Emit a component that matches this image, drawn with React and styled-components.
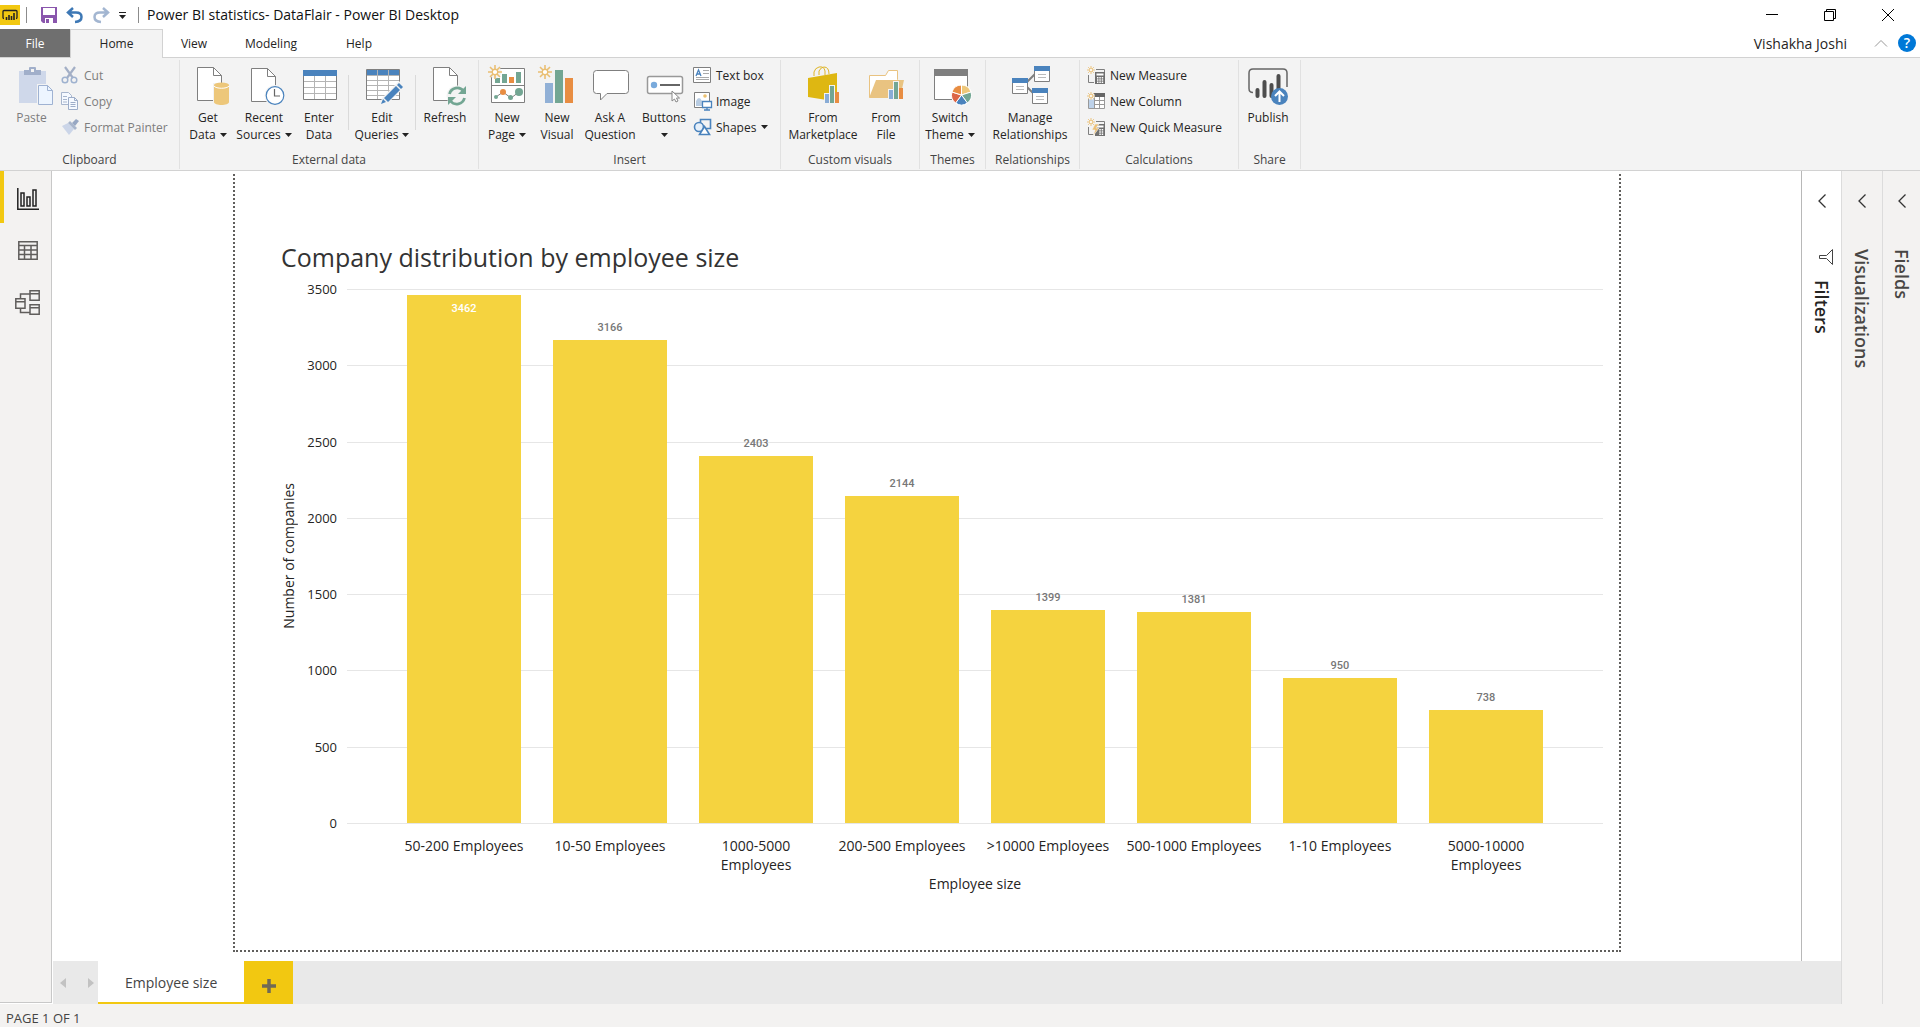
import React from "react";
import styled, { createGlobalStyle, css } from "styled-components";

const color = {
  yellow: "#f2c811",
  bar: "#f5d33f",
  chrome: "#f3f3f3",
  pane: "#f3f2f1",
  line: "#d2d2d2",
  blue: "#4a83bd",
  green: "#73a693",
  orange: "#e88d42",
  sand: "#edc77a",
  grey: "#7f7f7f",
};

const GlobalStyle = createGlobalStyle`
  * { box-sizing: border-box; }
  body {
    margin: 0;
    background: #fff;
    color: #252423;
    font-family: "Open Sans", "Noto Sans", sans-serif;
    font-size: 12px;
  }
  button {
    border: 0;
    padding: 0;
    background: none;
    color: inherit;
    font: inherit;
  }
  svg { display: block; flex: none; overflow: visible; }
`;

const Window = styled.div`
  display: flex;
  flex-direction: column;
  min-height: 100vh;
`;

/* ---------- title bar ---------- */

const TitleBar = styled.header`
  display: flex;
  align-items: center;
  height: 29px;
  padding-right: 3px;
`;

const TitleRule = styled.span`
  width: 1px;
  height: 16px;
  margin: 0 ${(p) => p.$after}px 0 ${(p) => p.$before}px;
  background: #8c8c8c;
`;

const QuickActions = styled.div`
  display: flex;
  align-items: center;
  gap: 8px;
`;

const WindowTitle = styled.h1`
  margin: 0;
  flex: 1;
  font-size: 14px;
  font-weight: 400;
  line-height: 20px;
  color: #111;
`;

const CaptionButton = styled.button`
  display: flex;
  align-items: center;
  justify-content: center;
  width: 58px;
  height: 28px;
`;

/* ---------- ribbon tabs ---------- */

const TabStrip = styled.nav`
  display: flex;
  align-items: stretch;
  height: 29px;
  border-bottom: 1px solid ${color.line};
`;

const RibbonTab = styled.button`
  width: ${(p) => p.$width}px;
  line-height: 28px;
  padding-top: 1px;
  text-align: center;
  ${(p) => p.$kind === "file" && css`
    background: #6f6f6f;
    color: #fff;
  `}
  ${(p) => p.$kind === "active" && css`
    height: 29px;
    padding-top: 0;
    border: 1px solid ${color.line};
    border-bottom: 0;
    background: ${color.chrome};
  `}
`;

const Account = styled.div`
  display: flex;
  align-items: center;
  margin-left: auto;
  padding-right: 4px;
  font-size: 14px;
`;

const AccountName = styled.span`
  margin-right: 28px;
`;

const HelpButton = styled.button`
  width: 18px;
  height: 18px;
  margin-left: 11px;
  border-radius: 50%;
  background: #0078d7;
  color: #fff;
  font-weight: 600;
  line-height: 18px;
`;

/* ---------- ribbon ---------- */

const Ribbon = styled.section`
  display: flex;
  height: 113px;
  padding: 2px 0 1px;
  border-bottom: 1px solid ${color.line};
  background: ${color.chrome};
`;

const Group = styled.section`
  display: flex;
  flex-direction: column;
  flex: none;
  width: ${(p) => p.$width}px;
  border-right: 1px solid #e1e1e1;
`;

const GroupItems = styled.div`
  display: flex;
  flex: 1;
  padding-left: 3px;
`;

const GroupName = styled.h2`
  margin: 0;
  font-size: 12px;
  font-weight: 400;
  line-height: 18px;
  text-align: center;
  white-space: nowrap;
  color: #444;
`;

const LargeButton = styled.button`
  display: flex;
  flex-direction: column;
  align-items: center;
  flex: none;
  gap: 3px;
  width: ${(p) => p.$width}px;
  padding-top: 6px;
  line-height: 17px;
  white-space: nowrap;
  &:disabled { color: #7d7d7d; }
`;

const LabelLine = styled.span`
  display: flex;
  align-items: center;
  justify-content: center;
  gap: 4px;
  min-height: 17px;
`;

const ItemRule = styled.span`
  width: 1px;
  height: 55px;
  margin: 15px 5px 0;
  background: #dadada;
`;

const SmallStack = styled.div`
  display: flex;
  flex-direction: column;
  padding: 2px 0 0 ${(p) => p.$inset}px;
`;

const SmallButton = styled.button`
  display: flex;
  align-items: center;
  gap: 5px;
  height: 26px;
  white-space: nowrap;
  &:disabled { color: #7d7d7d; }
`;

/* ---------- workspace ---------- */

const Workspace = styled.div`
  display: flex;
  flex: 1;
`;

const ViewRail = styled.nav`
  width: 52px;
  margin-bottom: 1px;
  border-right: 1px solid #c8c8c8;
  border-bottom: 1px solid #c8c8c8;
  background: ${color.pane};
`;

const ViewButton = styled.button`
  display: flex;
  align-items: center;
  justify-content: center;
  width: 100%;
  height: 52px;
  padding-top: 3px;
  border-left: 4px solid ${(p) => (p.$active ? color.yellow : "transparent")};
`;

const Main = styled.main`
  display: flex;
  flex: 1;
  flex-direction: column;
`;

const ReportRow = styled.div`
  display: flex;
  flex: 1;
`;

const Canvas = styled.div`
  display: flex;
  flex: 1;
  padding: 3px 180px 9px 181px;
`;

const ReportPage = styled.section`
  display: flex;
  flex: 1;
  flex-direction: column;
  padding: 65px 16px 56px 46px;
  border: 2px dotted #605e5c;
  border-top: 0;
`;

const ChartTitle = styled.h2`
  margin: 0 0 14px;
  font-size: 25px;
  font-weight: 400;
  line-height: 36px;
  color: #333;
`;

const ChartGrid = styled.div`
  display: grid;
  flex: 1;
  grid-template-columns: 16px 40px 1fr;
  grid-template-rows: 1fr auto auto;
  font-size: 14px;
`;

const ValueAxisTitle = styled.div`
  align-self: center;
  justify-self: center;
  writing-mode: vertical-rl;
  transform: rotate(180deg);
  line-height: 16px;
`;

const ValueAxis = styled.div`
  display: flex;
  flex-direction: column;
  justify-content: space-between;
  margin: -9px 0;
  font-size: 13px;
  line-height: 18px;
  text-align: right;
`;

const Plot = styled.div`
  position: relative;
  display: flex;
  min-height: 300px;
  margin-left: 10px;
  padding: 0 44px;
`;

const GridLines = styled.div`
  position: absolute;
  inset: 0 0 -1px;
  display: flex;
  flex-direction: column;
  justify-content: space-between;
`;

const GridLine = styled.span`
  height: 1px;
  background: #e6e6e6;
`;

const BarColumn = styled.div`
  position: relative;
  display: flex;
  flex: 1;
  flex-direction: column;
  align-items: center;
  justify-content: flex-end;
`;

const Bar = styled.div`
  flex: none;
  width: 78%;
  background: ${color.bar};
  text-align: center;
`;

const BarValue = styled.span`
  display: block;
  margin: 6px 0 4px;
  font-family: Roboto, sans-serif;
  font-size: 11px;
  font-weight: 500;
  line-height: 16px;
  text-align: center;
  color: ${(p) => (p.$inside ? "#fff" : "#777")};
`;

const CategoryAxis = styled.div`
  display: flex;
  grid-column: 3;
  margin-left: 10px;
  padding: 13px 44px 0;
`;

const Category = styled.span`
  flex: 1;
  padding: 0 4px;
  line-height: 19px;
  text-align: center;
`;

const CategoryAxisTitle = styled.div`
  grid-column: 3;
  margin-left: 10px;
  line-height: 20px;
  text-align: center;
`;

/* ---------- collapsed panes ---------- */

const SidePane = styled.aside`
  display: flex;
  flex-direction: column;
  align-items: center;
  width: ${(p) => p.$width}px;
  padding-top: 23px;
  border-left: 1px solid ${(p) => (p.$light ? "#b8b8b8" : "#dcdcdc")};
  background: ${(p) => (p.$light ? "#fff" : color.pane)};
  color: ${(p) => (p.$light ? "#252423" : "#484644")};
`;

const PaneToggle = styled.button`
  margin-bottom: 41px;
`;

const PaneName = styled.h2`
  display: flex;
  align-items: flex-start;
  gap: 15px;
  margin: 0;
  writing-mode: vertical-rl;
  font-size: 18px;
  font-weight: 600;
  line-height: 22px;
`;

/* ---------- page tabs and status ---------- */

const PageTabs = styled.nav`
  display: flex;
  height: 43px;
  margin-left: 1px;
  background: #e9e9e9;
`;

const PageArrows = styled.div`
  display: flex;
  align-items: center;
  justify-content: space-between;
  width: 45px;
  padding: 0 4px 0 7px;
`;

const PageTab = styled.button`
  padding: 2px 27px 0;
  border-bottom: 2px solid ${color.yellow};
  background: #fff;
  color: #444;
  font-size: 14px;
`;

const AddPage = styled.button`
  display: flex;
  align-items: center;
  justify-content: center;
  width: 49px;
  padding-top: 6px;
  background: ${color.yellow};
`;

const StatusBar = styled.footer`
  height: 23px;
  padding: 4px 6px 0;
  background: ${color.pane};
  color: #444;
  font-size: 13px;
  line-height: 20px;
`;

/* ---------- icons ---------- */

const Big = ({ children }) => (
  <svg width="48" height="40" viewBox="0 0 48 40" fill="none" aria-hidden="true">{children}</svg>
);
const Small = ({ children }) => (
  <svg width="18" height="18" viewBox="0 0 18 18" fill="none" aria-hidden="true">{children}</svg>
);
const Caret = () => (
  <svg width="7" height="4" viewBox="0 0 7 4" aria-hidden="true"><path d="M0 0h7L3.500 4z" fill="#222" /></svg>
);
const Sheet = ({ x, y }) => (
  <g transform={`translate(${x} ${y})`} stroke={color.grey}>
    <path d="M.5.5h16l8 8v25H.5z" fill="#fff" />
    <path d="M16.5.5v8h8" />
  </g>
);
const Spark = ({ x, y, r = 6 }) => (
  <g transform={`translate(${x} ${y}) scale(${r / 6})`}>
    <circle r="6.5" fill={color.chrome} />
    <path d="M0-7V-3M0 3V7M-7 0H-3M3 0H7M-5-5-2-2M2 2 5 5M-5 5-2 2M2-2 5-5" stroke="#eabf73" strokeWidth="1.6" />
    <circle r="2.8" stroke="#eabf73" strokeWidth="1.4" fill="#fff" />
  </g>
);
const MiniBars = ({ x, y }) => (
  <g transform={`translate(${x} ${y})`}>
    <path d="M-1 7h5V-1h6v7h5v12H-1z" fill={color.chrome} />
    <path d="M0 8h4v9H0z" fill="#89acd6" />
    <path d="M5 0h4v17H5z" fill={color.green} />
    <path d="M10 6h4v11h-4z" fill={color.orange} />
  </g>
);

const icons = {
  paste: (
    <Big>
      <path d="M11 5h27v32H11z" fill="#cfd8ea" />
      <path d="M16 9V4h5V2q0-1 1-1h5q1 0 1 1v2h5v5z" fill="#a1afca" />
      <path d="M23 3h3v3h-3z" fill="#f3f3f3" />
      <path d="M29 18h17v22H29z" fill={color.chrome} />
      <path d="M30.500 19.500h9l5 5v14h-14z" fill="#edf5ff" stroke="#9fb2d2" />
      <path d="M39.500 19.500v5h5" stroke="#9fb2d2" />
    </Big>
  ),
  data: (
    <Big>
      <Sheet x={13} y={1} />
      <path d="M29 17h17v23H29z" fill={color.chrome} />
      <path d="M30 19v17c0 4 15 4 15 0V19z" fill={color.sand} />
      <ellipse cx="37.500" cy="19" rx="7.500" ry="2.500" fill={color.sand} />
      <path d="M30 20c2 3 13 3 15 0" stroke="#fff" />
    </Big>
  ),
  recent: (
    <Big>
      <Sheet x={11} y={2} />
      <circle cx="35" cy="29.500" r="10.500" fill={color.chrome} />
      <circle cx="35" cy="29.500" r="8.800" fill="#fff" stroke={color.blue} strokeWidth="1.200" />
      <path d="M34.500 23v7H40" stroke="#666" strokeWidth="1.200" />
    </Big>
  ),
  table: (
    <Big>
      <path d="M8.500 4.500h33v29h-33z" fill="#fff" stroke={color.grey} />
      <path d="M8 4h34v6H8z" fill={color.blue} />
      <path d="M19.500 10v23M30.500 10v23M9 15.500h32M9 21.500h32M9 27.500h32" stroke="#b4b4b4" />
    </Big>
  ),
  edit: (
    <Big>
      <path d="M8.500 3.500h33v30h-33z" fill="#fff" stroke={color.grey} />
      <path d="M9 4h32v5H9z" fill={color.blue} />
      <path d="M19.500 4v29M30.500 4v29M9 9.500h32M9 14.500h32M9 19.500h32M9 24.500h32M9 29.500h32" stroke="#b4b4b4" />
      <path d="m22 39 2-7 17-17 6 6-17 16z" fill={color.chrome} />
      <path d="m23 38 2-5 3 3zM26 32l12-12 4 4-12 12zM39 19l2-2 4 4-2 2z" fill={color.blue} />
    </Big>
  ),
  refresh: (
    <Big>
      <Sheet x={12} y={1} />
      <circle cx="36" cy="30" r="10.500" fill={color.chrome} />
      <path d="M28.500 28a8 8 0 0 1 14-3M43.500 32a8 8 0 0 1-14 3" stroke={color.green} strokeWidth="2.800" />
      <path d="M45 20v8h-8zM27 39v-8h8z" fill={color.green} />
    </Big>
  ),
  newPage: (
    <Big>
      <path d="M8.500 2.500h33v34h-33z" fill="#fff" stroke={color.grey} />
      <path d="M9 19.500h32" stroke={color.grey} />
      <path d="M12 12h5v5h-5zM19 8h5v9h-5zM33 6h5v11h-5z" fill={color.green} />
      <path d="M26 11h5v6h-5z" fill={color.orange} />
      <path d="m13 31 7-5 8 6 8-6" stroke={color.grey} />
      <circle cx="13" cy="31" r="2" fill={color.green} />
      <circle cx="20" cy="26" r="3" fill={color.orange} />
      <circle cx="27.500" cy="31.500" r="2.500" fill={color.green} />
      <circle cx="36" cy="26" r="4" fill={color.green} />
      <Spark x={12} y={6} />
    </Big>
  ),
  newVisual: (
    <Big>
      <path d="M12 17h8v20h-8z" fill="#91b0d6" />
      <path d="M22 4h8v33h-8z" fill={color.green} />
      <path d="M32 12h8v25h-8z" fill={color.orange} />
      <Spark x={12} y={6} />
    </Big>
  ),
  ask: (
    <Big>
      <path d="M10.500 4.500h29q3 0 3 3v17q0 3-3 3H21l-6.500 6.500v-6.500h-4q-3 0-3-3v-17q0-3 3-3z" fill="#fff" stroke={color.grey} />
    </Big>
  ),
  buttons: (
    <Big>
      <rect x="7.500" y="10.500" width="35" height="17" rx="2" fill="#fff" stroke="#999" strokeWidth="1.500" />
      <circle cx="14" cy="19" r="3.200" fill="#79aadc" />
      <path d="M20 19h20" stroke="#666" strokeWidth="2" />
      <path d="m32 25 0 10 2.500-2 1.500 3 2-1-1.500-3h3z" fill="#fff" stroke="#888" />
    </Big>
  ),
  market: (
    <Big>
      <path d="M15 10V6q1-4 5-5 5-1 6 4v4M20 9V5q2-4 5-4 5 0 5 7" stroke="#dfb528" />
      <path d="m9 12 29-5v27l-4 1L9 31z" fill="#deb712" />
      <MiniBars x={26} y={20} />
    </Big>
  ),
  folder: (
    <Big>
      <path d="M7.500 31V9.500h16l3-5h9v9l-2 18z" fill="#fff" stroke="#e9c381" />
      <path d="m7 32 7-18h28l-4 18z" fill="#e9c381" />
      <MiniBars x={27} y={16} />
    </Big>
  ),
  theme: (
    <Big>
      <path d="M8.500 3.500h33v30h-33z" fill="#fff" stroke={color.grey} />
      <path d="M8 3h34v7H8z" fill={color.grey} />
      <circle cx="35.500" cy="29" r="10.500" fill="#fff" />
      <g transform="translate(35.500 29)" stroke="#fff" strokeWidth="1">
        <path d="M0 0V-10A10 10 0 0 1 9.500-3z" fill={color.sand} />
        <path d="M0 0 9.500-3A10 10 0 0 1 5.900 8z" fill={color.green} />
        <path d="M0 0 5.900 8A10 10 0 0 1-5.900 8z" fill={color.blue} />
        <path d="M0 0-5.900 8A10 10 0 0 1-9.500-3z" fill="#dc6646" />
        <path d="M0 0-9.500-3A10 10 0 0 1 0-10z" fill={color.orange} />
      </g>
    </Big>
  ),
  relations: (
    <Big>
      <path d="m20 17 9-9M20 20l8 8" stroke={color.grey} strokeWidth="2" />
      {[[6, 12], [28, 0], [26, 22]].map(([x, y]) => (
        <g key={x} transform={`translate(${x} ${y})`}>
          <path d="M.5.500h15v15H.5z" fill="#fff" stroke={color.grey} />
          <path d="M0 0h16v5H0z" fill={color.blue} />
          <path d="M4 8.500h8M4 11.500h8" stroke="#bbb" />
        </g>
      ))}
    </Big>
  ),
  publish: (
    <Big>
      <path d="M9 26.500q-4 0-4-4V7q0-4 4-4h30q4 0 4 4v14" stroke="#666" strokeWidth="1.500" />
      <path d="M13.500 24v6M20.500 16v14M27.500 19v11M34.500 10v15" stroke="#4d4d4d" strokeWidth="4" strokeLinecap="round" />
      <circle cx="35.500" cy="30.500" r="8.500" fill={color.blue} />
      <path d="M35.500 36V26M31 30l4.500-4.500L40 30" stroke="#fff" strokeWidth="2" />
    </Big>
  ),
  cut: (
    <Small>
      <path d="m4 1 8 11M14 1 6 12" stroke="#a3afc6" strokeWidth="2.200" />
      <circle cx="4" cy="14" r="2.800" stroke="#9fb2cf" strokeWidth="1.500" />
      <circle cx="13" cy="14" r="2.800" stroke="#9fb2cf" strokeWidth="1.500" />
    </Small>
  ),
  copy: (
    <Small>
      <path d="M.5.500h7l3 3v9H.5zM2 4.500h4M2 7.500h4M2 10h4" fill="#f5f9ff" stroke="#a7b5cd" />
      <path d="M7.500 5.500h6l3 3v9h-9z" fill="#f5f9ff" stroke="#9dadc9" />
      <path d="M13.500 5.500v3h3M9.500 10.500h5M9.500 12.500h5M9.500 14.500h5" stroke="#9dadc9" />
    </Small>
  ),
  painter: (
    <Small>
      <path d="m1 8 6-3 6 6-5 6z" fill="#cbd5e8" />
      <path d="m7 5 2-2 7 7-2 2z" fill="#a8b5cc" />
      <path d="m11 5 4-4 3 2-4 5z" fill="#97a7c3" />
    </Small>
  ),
  textBox: (
    <Small>
      <path d="M.5 1.500h17v15H.5z" fill="#fff" stroke={color.grey} />
      <path d="m3 10 2.500-6L8 10M4 8h3" stroke={color.blue} strokeWidth="1.300" />
      <path d="M10 4.500h6M10 7.500h6M3 11.500h13M3 13.500h13" stroke="#aaa" />
    </Small>
  ),
  image: (
    <Small>
      <path d="M1.500.500h15v15h-15z" fill="#fff" stroke={color.grey} />
      <circle cx="12" cy="4" r="1.800" fill="#ecc06e" />
      <path d="M3 14V9q3-6 6 0v5z" fill="#b8cce2" />
      <path d="M9.500 9.500h9v6h-9z" fill="#fff" stroke={color.blue} strokeWidth="1.300" />
      <path d="M14 16v2M11 18h6" stroke={color.blue} strokeWidth="1.300" />
    </Small>
  ),
  shapes: (
    <Small>
      <path d="M7.500 1.500h10v9h-10z" stroke={color.blue} strokeWidth="1.600" />
      <circle cx="6" cy="9" r="4.500" fill="#e6f0fa" stroke={color.blue} strokeWidth="1.600" />
      <path d="m11.500 8.500 5 8h-10z" fill="#fff" stroke={color.blue} strokeWidth="1.600" />
    </Small>
  ),
  measure: (
    <Small>
      <path d="M1.500 9v7.500H7M9 3.500h8.500V6" stroke={color.grey} />
      <path d="M8 6h10v12H8z" fill="#707070" />
      <path d="M9.500 7.500h7v2h-7zM10 11h1.500v1.500H10zM12.300 11h1.500v1.500h-1.500zM14.700 11h1.500v1.500h-1.500zM10 13.200h1.500v1.500H10zM12.300 13.200h1.500v1.500h-1.500zM14.700 13.200h1.500v1.500h-1.500zM10 15.500h1.500V17H10zM12.300 15.500h1.500V17h-1.500zM14.700 15.500h1.500V17h-1.500z" fill="#fff" />
      <Spark x={4} y={4} r={3.400} />
    </Small>
  ),
  column: (
    <Small>
      <path d="M1.500 1.500h16v15h-16z" fill="#fff" stroke="#999" />
      <path d="M2 6h5v10H2z" fill="#bdd2ea" />
      <path d="M7 1h11v4H7z" fill="#666" />
      <path d="M7.500 5v11M12.500 5v11M7 8.500h10M7 12.500h10" stroke="#999" />
      <Spark x={4} y={4} r={3.400} />
    </Small>
  ),
  quick: (
    <Small>
      <path d="M1.500 9v7.500H7M9 3.500h8.500V6" stroke={color.grey} />
      <path d="M8 6h10v12H8z" fill="#707070" />
      <path d="M9.500 7.500h7v2h-7zM12.300 11h1.500v1.500h-1.500zM14.700 11h1.500v1.500h-1.500zM12.300 13.200h1.500v1.500h-1.500zM14.700 13.200h1.500v1.500h-1.500zM12.300 15.500h1.500V17h-1.500zM14.700 15.500h1.500V17h-1.500z" fill="#fff" />
      <path d="m8 6-3 6h3l-2 6 6-8H9l3-4z" fill="#ecbf74" stroke={color.chrome} strokeWidth=".6" />
      <Spark x={4} y={4} r={3.400} />
    </Small>
  ),
};

const Chevron = () => (
  <svg width="8" height="14" viewBox="0 0 8 14" fill="none" stroke="#333" strokeWidth="1.300" aria-hidden="true">
    <path d="M7.500.5 1 7l6.500 6.500" />
  </svg>
);

/* ---------- content ---------- */

const ribbonGroups = [
  { name: "Clipboard", width: 180, large: [{ icon: "paste", lines: ["Paste"], width: 57, disabled: true }],
    small: [["cut", "Cut"], ["copy", "Copy"], ["painter", "Format Painter"]], smallDisabled: true, inset: 1 },
  { name: "External data", width: 299, large: [
    { icon: "data", lines: ["Get", "Data"], width: 50, menu: true },
    { icon: "recent", lines: ["Recent", "Sources"], width: 62, menu: true },
    { icon: "table", lines: ["Enter", "Data"], width: 48 },
    { rule: true },
    { icon: "edit", lines: ["Edit", "Queries"], width: 56, menu: true },
    { rule: true },
    { icon: "refresh", lines: ["Refresh"], width: 48 },
  ] },
  { name: "Insert", width: 302, large: [
    { icon: "newPage", lines: ["New", "Page"], width: 50, menu: true },
    { icon: "newVisual", lines: ["New", "Visual"], width: 50 },
    { icon: "ask", lines: ["Ask A", "Question"], width: 56 },
    { icon: "buttons", lines: ["Buttons", ""], width: 52, menu: true },
  ], small: [["textBox", "Text box"], ["image", "Image"], ["shapes", "Shapes", true]], inset: 3 },
  { name: "Custom visuals", width: 139, large: [
    { icon: "market", lines: ["From", "Marketplace"], width: 78 },
    { icon: "folder", lines: ["From", "File"], width: 48 },
  ] },
  { name: "Themes", width: 66, large: [{ icon: "theme", lines: ["Switch", "Theme"], width: 54, menu: true }] },
  { name: "Relationships", width: 94, large: [{ icon: "relations", lines: ["Manage", "Relationships"], width: 82 }] },
  { name: "Calculations", width: 159, large: [],
    small: [["measure", "New Measure"], ["column", "New Column"], ["quick", "New Quick Measure"]], inset: 4 },
  { name: "Share", width: 62, large: [{ icon: "publish", lines: ["Publish"], width: 52 }] },
];

const companies = [
  ["50-200 Employees", 3462],
  ["10-50 Employees", 3166],
  ["1000-5000 Employees", 2403],
  ["200-500 Employees", 2144],
  [">10000 Employees", 1399],
  ["500-1000 Employees", 1381],
  ["1-10 Employees", 950],
  ["5000-10000 Employees", 738],
];
const axisMax = 3500;
const ticks = [3500, 3000, 2500, 2000, 1500, 1000, 500, 0];

function RibbonGroup({ group }) {
  return (
    <Group $width={group.width} aria-label={group.name}>
      <GroupItems>
        {group.large.map((item, i) =>
          item.rule ? (
            <ItemRule key={i} />
          ) : (
            <LargeButton key={i} $width={item.width} disabled={item.disabled}>
              {icons[item.icon]}
              <span>
                {item.lines.map((line, n) => (
                  <LabelLine key={n}>
                    {line}
                    {item.menu && n === item.lines.length - 1 && <Caret />}
                  </LabelLine>
                ))}
              </span>
            </LargeButton>
          )
        )}
        {group.small && (
          <SmallStack $inset={group.inset}>
            {group.small.map(([icon, label, menu]) => (
              <SmallButton key={label} disabled={group.smallDisabled}>
                {icons[icon]}
                {label}
                {menu && <Caret />}
              </SmallButton>
            ))}
          </SmallStack>
        )}
      </GroupItems>
      <GroupName>{group.name}</GroupName>
    </Group>
  );
}

function CompanyChart() {
  return (
    <>
      <ChartTitle>Company distribution by employee size</ChartTitle>
      <ChartGrid>
        <ValueAxisTitle>Number of companies</ValueAxisTitle>
        <ValueAxis>
          {ticks.map((t) => <span key={t}>{t}</span>)}
        </ValueAxis>
        <Plot>
          <GridLines>
            {ticks.map((t) => <GridLine key={t} />)}
          </GridLines>
          {companies.map(([name, value]) => {
            const inside = value / axisMax > 0.95;
            return (
              <BarColumn key={name}>
                {!inside && <BarValue>{value}</BarValue>}
                <Bar style={{ height: `${(value / axisMax) * 100}%` }}>
                  {inside && <BarValue $inside>{value}</BarValue>}
                </Bar>
              </BarColumn>
            );
          })}
        </Plot>
        <CategoryAxis>
          {companies.map(([name]) => <Category key={name}>{name}</Category>)}
        </CategoryAxis>
        <CategoryAxisTitle>Employee size</CategoryAxisTitle>
      </ChartGrid>
    </>
  );
}

export default function App() {
  return (
    <Window>
      <GlobalStyle />
      <TitleBar>
        <svg width="20" height="20" viewBox="0 0 20 20" fill="none" aria-hidden="true">
          <path d="M0 0h20v20H0z" fill={color.yellow} />
          <path d="M4 13.500q-1 0-1-1v-6q0-1 1-1h12q1 0 1 1v6q0 1-1 1" stroke="#222" strokeWidth="1.300" />
          <path d="M6.500 12v3M9 10v5M11.500 11v4M14 8v7" stroke="#222" strokeWidth="1.600" />
        </svg>
        <TitleRule $before={6} $after={14} />
        <QuickActions>
          <button aria-label="Save">
            <svg width="16" height="16" viewBox="0 0 16 16" fill="none">
              <path d="M0 0h16v16H2l-2-2z" fill="#8a56ad" />
              <path d="M2 1h12v7H2z" fill="#fff" />
              <path d="M4 11h8v5H4z" fill="#fff" />
              <path d="M5 12h3v4H5z" fill="#8a56ad" />
            </svg>
          </button>
          <button aria-label="Undo">
            <svg width="18" height="16" viewBox="0 0 18 16" fill="none" stroke="#3d78b5" strokeWidth="2.500">
              <path d="M8 1 3 5.500 8 10M3 5.500h8q5.500 0 5.500 4.500t-6.500 5" />
            </svg>
          </button>
          <button aria-label="Redo" disabled>
            <svg width="18" height="16" viewBox="0 0 18 16" fill="none" stroke="#a3b6d1" strokeWidth="2.500">
              <path d="m12 1 5 4.500-5 4.500M17 5.500H9Q3.500 5.500 3.500 10t6.500 5" />
            </svg>
          </button>
          <button aria-label="Customize quick access toolbar">
            <svg width="12" height="10" viewBox="0 0 12 10" fill="#222">
              <path d="M2 2h7v1H2zM2 5h7L5.500 9z" />
            </svg>
          </button>
        </QuickActions>
        <TitleRule $before={9} $after={8} />
        <WindowTitle>Power BI statistics- DataFlair - Power BI Desktop</WindowTitle>
        <CaptionButton aria-label="Minimize">
          <svg width="12" height="12" viewBox="0 0 12 12" stroke="#000"><path d="M0 5.500h12" /></svg>
        </CaptionButton>
        <CaptionButton aria-label="Restore">
          <svg width="12" height="12" viewBox="0 0 12 12" fill="none" stroke="#000">
            <path d="M.5 2.500h9v9h-9zM2.500 2.500v-2h9v9h-2" />
          </svg>
        </CaptionButton>
        <CaptionButton aria-label="Close">
          <svg width="12" height="12" viewBox="0 0 12 12" stroke="#000"><path d="m0 0 12 12M12 0 0 12" /></svg>
        </CaptionButton>
      </TitleBar>

      <TabStrip>
        <RibbonTab $width={70} $kind="file">File</RibbonTab>
        <RibbonTab $width={93} $kind="active">Home</RibbonTab>
        <RibbonTab $width={62}>View</RibbonTab>
        <RibbonTab $width={92}>Modeling</RibbonTab>
        <RibbonTab $width={84}>Help</RibbonTab>
        <Account>
          <AccountName>Vishakha Joshi</AccountName>
          <button aria-label="Collapse ribbon">
            <svg width="12" height="7" viewBox="0 0 12 7" fill="none" stroke="#999"><path d="m0 6.500 6-6 6 6" /></svg>
          </button>
          <HelpButton aria-label="Help">?</HelpButton>
        </Account>
      </TabStrip>

      <Ribbon>
        {ribbonGroups.map((group) => <RibbonGroup key={group.name} group={group} />)}
      </Ribbon>

      <Workspace>
        <ViewRail>
          <ViewButton $active aria-label="Report view">
            <svg width="22" height="22" viewBox="0 0 22 22" fill="none" stroke="#222" strokeWidth="1.500">
              <path d="M.8 0v21.200H22M4 5h3v13H4zM10 9h3v9h-3zM16 2h3v16h-3z" />
            </svg>
          </ViewButton>
          <ViewButton aria-label="Data view">
            <svg width="20" height="19" viewBox="0 0 20 19" fill="none" stroke="#605e5c" strokeWidth="1.500">
              <path d="M.8.8h18.400v17.400H.8zM1 4.500h18M1 9h18M1 13.500h18M6.500 4.500v14M13 4.500v14" />
            </svg>
          </ViewButton>
          <ViewButton aria-label="Model view">
            <svg width="25" height="25" viewBox="0 0 25 25" fill="none" stroke="#605e5c" strokeWidth="1.500">
              <path d="M15 .8h9.200v9.400H15zM15 3.800h9M15 14.800h9.200v9.400H15zM15 17.800h9M.8 8.800H10v9.400H.8zM1 11.800h9M5.500 9V4H15M5.500 18v4.500H15" />
            </svg>
          </ViewButton>
        </ViewRail>

        <Main>
          <ReportRow>
            <Canvas>
              <ReportPage>
                <CompanyChart />
              </ReportPage>
            </Canvas>
            <SidePane $width={40} $light>
              <PaneToggle aria-label="Expand filters"><Chevron /></PaneToggle>
              <PaneName>
                <svg width="14" height="16" viewBox="0 0 14 16" fill="none" stroke="#444" aria-hidden="true">
                  <path d="M13.500.5v15l-6-6h-7v-3h7z" />
                </svg>
                Filters
              </PaneName>
            </SidePane>
          </ReportRow>
          <PageTabs>
            <PageArrows>
              <button aria-label="Previous page" disabled>
                <svg width="6" height="10" viewBox="0 0 6 10" fill="#c2c2c2"><path d="M6 0v10L0 5z" /></svg>
              </button>
              <button aria-label="Next page" disabled>
                <svg width="6" height="10" viewBox="0 0 6 10" fill="#c2c2c2"><path d="M0 0v10l6-5z" /></svg>
              </button>
            </PageArrows>
            <PageTab>Employee size</PageTab>
            <AddPage aria-label="New page">
              <svg width="14" height="14" viewBox="0 0 14 14" stroke="#706a55" strokeWidth="3.500"><path d="M0 7h14M7 0v14" /></svg>
            </AddPage>
          </PageTabs>
        </Main>

        <SidePane $width={41}>
          <PaneToggle aria-label="Expand visualizations"><Chevron /></PaneToggle>
          <PaneName>Visualizations</PaneName>
        </SidePane>
        <SidePane $width={38}>
          <PaneToggle aria-label="Expand fields"><Chevron /></PaneToggle>
          <PaneName>Fields</PaneName>
        </SidePane>
      </Workspace>

      <StatusBar>PAGE 1 OF 1</StatusBar>
    </Window>
  );
}
